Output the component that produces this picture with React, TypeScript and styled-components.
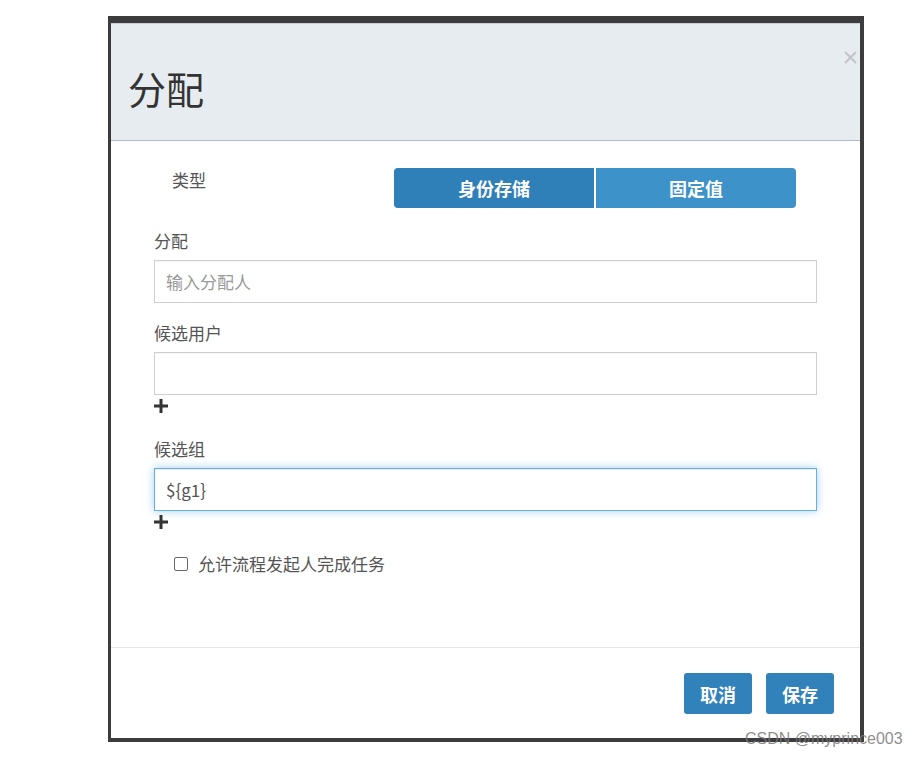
import React from 'react';
import styled, { createGlobalStyle } from 'styled-components';

const GlobalStyle = createGlobalStyle`
  html, body {
    margin: 0;
    padding: 0;
    background: #ffffff;
  }
  body {
    font-family: "Noto Sans CJK SC", "Noto Sans", sans-serif;
    color: #333;
  }
`;

const Page = styled.div`
  position: relative;
  width: 918px;
  height: 758px;
  padding: 16px 0 0 108px;
  box-sizing: border-box;
`;

/* dark frame of the captured window */
const Frame = styled.div`
  width: 756px;
  height: 726px;
  box-sizing: border-box;
  border-style: solid;
  border-color: #3c3c3c;
  border-width: 7px 4px 4px 3px;
  background: #fff;
  display: flex;
  flex-direction: column;
`;

const Header = styled.div`
  position: relative;
  background: #e7ecf0;
  border-top: 1px solid #c9ced6;
  border-bottom: 1px solid #b3bccb;
  padding: 43px 17px 31px;
`;

const Title = styled.h4`
  margin: 0;
  font-size: 38px;
  line-height: 42px;
  font-weight: 400;
  color: #333;
`;

const CloseButton = styled.button`
  position: absolute;
  top: 25px;
  right: 2px;
  width: 16px;
  height: 16px;
  padding: 0;
  border: none;
  background: none;
  display: flex;
  align-items: center;
  justify-content: center;
`;

const Body = styled.div`
  padding: 27px 44px 72px 43px;
`;

const TypeRow = styled.div`
  display: flex;
  align-items: flex-start;
  margin-bottom: 21px;
`;

const TypeLabel = styled.div`
  width: 240px;
  padding-left: 18px;
  box-sizing: border-box;
  font-size: 17px;
  line-height: 24px;
  color: #555;
`;

const ToggleGroup = styled.div`
  display: flex;
  gap: 2px;
`;

const ToggleButton = styled.button<{ $active?: boolean; $pos: 'first' | 'last' }>`
  width: 200px;
  height: 40px;
  border: none;
  color: #fff;
  font-family: inherit;
  font-size: 18px;
  font-weight: 700;
  background: ${(p) => (p.$active ? '#2f80b9' : '#3d92c9')};
  border-radius: ${(p) => (p.$pos === 'first' ? '4px 0 0 4px' : '0 4px 4px 0')};
`;

const FieldLabel = styled.label`
  display: block;
  font-size: 17px;
  line-height: 24px;
  color: #555;
  margin-bottom: 7px;
`;

const Field = styled.div`
  margin-bottom: 18px;
`;

const TextInput = styled.input<{ $focused?: boolean }>`
  display: block;
  width: 663px;
  height: 43px;
  box-sizing: border-box;
  padding: 0 11px;
  font-family: inherit;
  font-size: 17px;
  color: #555;
  background: #fff;
  outline: none;
  border: 1px solid ${(p) => (p.$focused ? '#66afe9' : '#cfcfcf')};
  box-shadow: ${(p) =>
    p.$focused
      ? 'inset 0 1px 1px rgba(0,0,0,.075), 0 0 8px rgba(102,175,233,.6)'
      : 'inset 0 1px 1px rgba(0,0,0,.04)'};
  &::placeholder {
    color: #999;
  }
`;

const AddIcon = styled.div`
  height: 24px;
  padding-top: 4px;
  box-sizing: border-box;
  svg {
    display: block;
  }
`;

const CheckRow = styled.label`
  display: flex;
  align-items: center;
  gap: 10px;
  padding-left: 20px;
  margin-top: 1px;
  font-size: 17px;
  line-height: 22px;
  color: #555;
`;

const CheckBox = styled.span`
  width: 12px;
  height: 12px;
  border: 1px solid #666;
  border-radius: 2px;
  background: #fff;
`;

const Footer = styled.div`
  border-top: 1px solid #e5e5e5;
  padding: 25px 26px 25px;
  display: flex;
  justify-content: flex-end;
  gap: 14px;
`;

const FooterButton = styled.button`
  height: 41px;
  padding: 0 16px;
  border: none;
  border-radius: 3px;
  background: #3181ba;
  color: #fff;
  font-family: inherit;
  font-size: 18px;
  font-weight: 700;
`;

const Watermark = styled.div`
  position: absolute;
  left: 745px;
  top: 728px;
  font-family: "Liberation Sans", Arial, sans-serif;
  font-size: 16px;
  line-height: 22px;
  color: rgba(120, 120, 120, 0.85);
`;

const PlusIcon = () => (
  <svg width="14" height="14" viewBox="0 0 14 14">
    <path d="M5.5 0h3v5.5H14v3H8.5V14h-3V8.5H0v-3h5.5z" fill="#333" />
  </svg>
);

const CloseIcon = () => (
  <svg width="13" height="13" viewBox="0 0 13 13">
    <path d="M1 1l11 11M12 1L1 12" stroke="#c2c4c7" strokeWidth="2" />
  </svg>
);

const App = () => {
  return (
    <Page>
      <GlobalStyle />
      <Frame>
        <Header>
          <Title>分配</Title>
          <CloseButton aria-label="close">
            <CloseIcon />
          </CloseButton>
        </Header>
        <Body>
          <TypeRow>
            <TypeLabel>类型</TypeLabel>
            <ToggleGroup>
              <ToggleButton $active $pos="first">身份存储</ToggleButton>
              <ToggleButton $pos="last">固定值</ToggleButton>
            </ToggleGroup>
          </TypeRow>

          <Field>
            <FieldLabel>分配</FieldLabel>
            <TextInput placeholder="输入分配人" readOnly />
          </Field>

          <Field>
            <FieldLabel>候选用户</FieldLabel>
            <TextInput readOnly />
            <AddIcon>
              <PlusIcon />
            </AddIcon>
          </Field>

          <Field>
            <FieldLabel>候选组</FieldLabel>
            <TextInput $focused value="${g1}" readOnly />
            <AddIcon>
              <PlusIcon />
            </AddIcon>
          </Field>

          <CheckRow>
            <CheckBox />
            允许流程发起人完成任务
          </CheckRow>
        </Body>
        <Footer>
          <FooterButton>取消</FooterButton>
          <FooterButton>保存</FooterButton>
        </Footer>
      </Frame>
      <Watermark>CSDN @myprince003</Watermark>
    </Page>
  );
};

export default App;
